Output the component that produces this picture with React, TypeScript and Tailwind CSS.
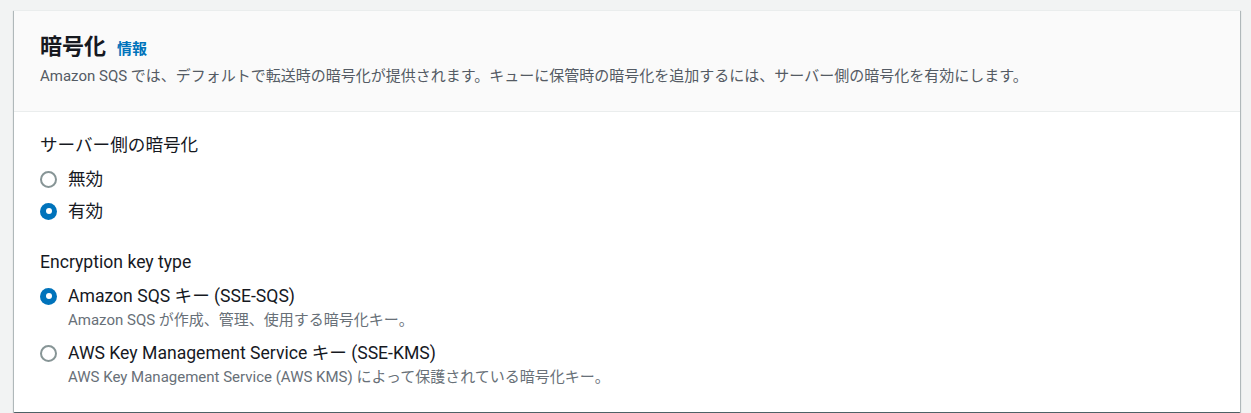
import { useState } from 'react';

const FONT = "font-['Roboto','Noto_Sans_CJK_JP',sans-serif]";

interface Option {
  value: string;
  label: string;
  description?: string;
}

const Radio = ({ checked }: { checked: boolean }) =>
  checked ? (
    <span className="flex h-[17px] w-[17px] shrink-0 items-center justify-center rounded-full bg-[#0073bb]">
      <span className="h-[6px] w-[6px] rounded-full bg-white" />
    </span>
  ) : (
    <span className="h-[17px] w-[17px] shrink-0 rounded-full border-2 border-[#879596] bg-white" />
  );

const RadioGroup = ({
  label,
  options,
  value,
  onChange,
}: {
  label: string;
  options: Option[];
  value: string;
  onChange: (v: string) => void;
}) => (
  <div className="flex flex-col">
    <div className="text-[17.6px] leading-[24px] text-[#16191f]">{label}</div>
    <div className="mt-[11px] flex flex-col gap-[9px]">
      {options.map((o) => (
        <label key={o.value} className="flex cursor-pointer flex-col" onClick={() => onChange(o.value)}>
          <div className="flex items-center gap-[11px]">
            <Radio checked={value === o.value} />
            <span className="text-[17.6px] leading-[23px] text-[#16191f]">{o.label}</span>
          </div>
          {o.description && (
            <div className="mt-[1px] mb-[2px] pl-[28px] text-[15px] leading-[22px] text-[#687078]">{o.description}</div>
          )}
        </label>
      ))}
    </div>
  </div>
);

export default function App() {
  const [sse, setSse] = useState('on');
  const [keyType, setKeyType] = useState('sqs');

  return (
    <div className={`${FONT} h-[413px] overflow-hidden bg-[#f2f3f3] pl-[14px] pr-[11px] pt-[10px]`}>
      <div className="border-t border-[#eaeded] bg-white shadow-[0_1px_1px_0_rgba(0,28,36,0.5),1px_1px_1px_0_rgba(0,28,36,0.2),-1px_1px_1px_0_rgba(0,28,36,0.2)]">
        <div className="border-b border-[#eaeded] bg-[#fafafa] px-[26px] pb-[24px] pt-[23px]">
          <div className="flex items-baseline gap-[11px]">
            <h2 className="text-[22px] font-bold leading-[26px] text-[#16191f]">暗号化</h2>
            <a className="text-[15px] font-bold text-[#0073bb]" href="#">
              情報
            </a>
          </div>
          <p className="mt-[4px] text-[15px] leading-[22px] text-[#545b64]">
            Amazon SQS では、デフォルトで転送時の暗号化が提供されます。キューに保管時の暗号化を追加するには、サーバー側の暗号化を有効にします。
          </p>
        </div>
        <div className="flex flex-col gap-[27px] px-[26px] pb-[22px] pt-[21px]">
          <RadioGroup
            label="サーバー側の暗号化"
            value={sse}
            onChange={setSse}
            options={[
              { value: 'off', label: '無効' },
              { value: 'on', label: '有効' },
            ]}
          />
          <RadioGroup
            label="Encryption key type"
            value={keyType}
            onChange={setKeyType}
            options={[
              { value: 'sqs', label: 'Amazon SQS キー (SSE-SQS)', description: 'Amazon SQS が作成、管理、使用する暗号化キー。' },
              {
                value: 'kms',
                label: 'AWS Key Management Service キー (SSE-KMS)',
                description: 'AWS Key Management Service (AWS KMS) によって保護されている暗号化キー。',
              },
            ]}
          />
        </div>
      </div>
    </div>
  );
}
